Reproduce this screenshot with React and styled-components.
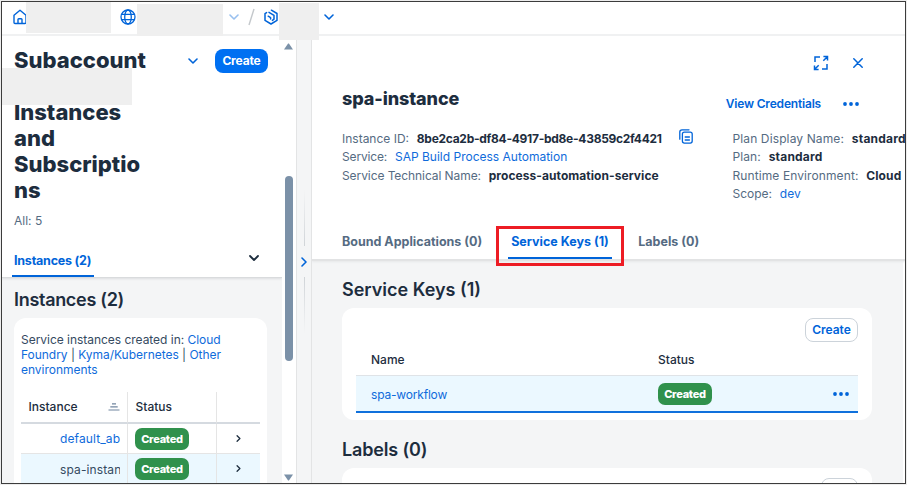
import React from 'react';
import styled, { createGlobalStyle } from 'styled-components';

const GlobalStyle = createGlobalStyle`
  * { box-sizing: border-box; }
  body { margin: 0; background: #ededed; overflow: hidden; }
  h1, h2, p { margin: 0; }
  svg { display: block; flex: none; }
`;

const Frame = styled.div`
  width: 905px;
  height: 483px;
  margin: 1px;
  border: 1px solid #3c3c3c;
  background: #fff;
  overflow: hidden;
  display: flex;
  flex-direction: column;
  font-family: Inter, "Noto Sans", sans-serif;
  font-size: 12px;
  color: #1d2d3e;
  white-space: nowrap;
`;

/* Breadcrumb bar */
const ShellBar = styled.header`
  flex: none;
  height: 34px;
  border-bottom: 2px solid #f0f1f2;
  display: flex;
  align-items: flex-start;
  padding-left: 11px;
  position: relative;
  z-index: 2;
`;
const Slot = styled.span`
  width: ${(p) => p.$w}px;
  height: 30px;
  flex: none;
  display: flex;
  align-items: center;
  justify-content: center;
  opacity: ${(p) => (p.$faded ? 0.4 : 1)};
`;
const Redacted = styled.span`
  flex: none;
  width: ${(p) => p.$w}px;
  height: ${(p) => p.$h}px;
  margin-top: ${(p) => p.$top}px;
  margin-right: ${(p) => p.$gap}px;
  margin-left: ${(p) => p.$lead || 0}px;
  background: #efefef;
`;

const Columns = styled.div`
  flex: 1;
  min-height: 0;
  display: flex;
`;

/* Left column */
const Master = styled.section`
  width: 280px;
  flex: none;
  display: flex;
  flex-direction: column;
  overflow: hidden;
`;
const MasterHeader = styled.div`
  flex: none;
  height: 242px;
  padding: 11px 14px 0 12px;
  display: flex;
  flex-direction: column;
  position: relative;
  border-bottom: 1px solid #d9dbdd;
  box-shadow: 0 1px 2px #dcdee0;
  z-index: 1;
`;
const TitleRow = styled.div`
  display: flex;
  align-items: flex-start;
`;
const PageTitle = styled.h1`
  width: 174px;
  font-size: 22px;
  font-weight: 800;
  line-height: 26px;
`;
const TitleLine = styled.span`
  display: block;
  min-height: 26px;
`;
const TitleCover = styled.div`
  position: absolute;
  left: 0;
  top: 32px;
  width: 130px;
  height: 37px;
  background: #efefef;
`;
const TitleChevron = styled.div`
  width: 27px;
  padding-top: 11px;
`;
const PrimaryButton = styled.button`
  width: 53px;
  height: 24px;
  margin-top: 2px;
  padding: 0;
  border: 0;
  border-radius: 8px;
  background: #0070f2;
  color: #fff;
  font: 700 12px/24px Inter, sans-serif;
  letter-spacing: -0.15px;
`;
const Counter = styled.p`
  margin-top: 10px;
  line-height: 16px;
  font-size: 12px;
  color: #556b82;
`;
const MasterTabs = styled.div`
  margin-top: auto;
  display: flex;
  justify-content: space-between;
  align-items: flex-start;
  height: 26px;
  padding-right: 9px;
`;
const MasterTab = styled.span`
  margin-left: -2px;
  width: 82px;
  height: 26px;
  padding-left: 2px;
  border-bottom: 2px solid #0064d9;
  font-size: 12.5px;
  font-weight: 700;
  line-height: 20px;
  letter-spacing: -0.22px;
  color: #0064d9;
`;
const TabMenu = styled.span`
  padding-top: 4px;
`;
const MasterBody = styled.div`
  flex: 1;
  min-height: 0;
  background: #f4f5f6;
  padding: 10px 15px 0 12px;
`;
const SectionTitle = styled.h2`
  font-size: 18px;
  font-weight: 600;
  line-height: 24px;
  letter-spacing: ${(p) => p.$ls || 0}px;
`;
const Card = styled.div`
  background: #fff;
  border-radius: 12px;
`;
const InstancesCard = styled(Card)`
  margin-top: 6px;
  height: 180px;
  padding: 15px 7px 0;
`;
const Note = styled.p`
  height: 59px;
  font-size: 12px;
  line-height: 14.8px;
  letter-spacing: -0.03px;
  color: #354a5f;
`;
const Link = styled.span`
  color: #0f6bdb;
`;
const InstanceTable = styled.div`
  display: grid;
  grid-template-columns: 107px 89px 43px;
`;
const HeadCell = styled.div`
  height: 32px;
  padding: 0 7px 1px 7.5px;
  display: flex;
  align-items: center;
  justify-content: space-between;
  font-weight: 500;
  border-bottom: 2px solid #d5dae0;
  border-right: ${(p) => (p.$last ? 0 : 1)}px solid #e5e5e5;
`;
const Cell = styled.div`
  height: 30px;
  padding: ${(p) => p.$pad || '0 7px 0'};
  display: flex;
  align-items: center;
  justify-content: ${(p) => (p.$center ? 'center' : 'flex-start')};
  background: ${(p) => (p.$selected ? '#ebf8ff' : '#fff')};
  border-bottom: 1px solid #e5e5e5;
  border-right: ${(p) => (p.$center ? 0 : 1)}px solid #e5e5e5;
`;
const ClippedName = styled.span`
  width: 60px;
  overflow: hidden;
  letter-spacing: 0.12px;
  color: ${(p) => (p.$link ? '#0f6bdb' : '#354a5f')};
`;
const Badge = styled.span`
  width: 54px;
  height: 22px;
  border-radius: 7px;
  background: #30914c;
  color: #fff;
  font-size: 11px;
  font-weight: 800;
  line-height: 22px;
  letter-spacing: -0.25px;
  text-align: center;
`;

const ScrollTrack = styled.div`
  width: 14px;
  flex: none;
  display: flex;
  flex-direction: column;
  align-items: center;
  justify-content: space-between;
  padding: 7px 1px 2px 0;
`;
const ScrollThumb = styled.div`
  width: 8px;
  height: 185px;
  margin-top: 12px;
  margin-left: 1px;
  border-radius: 4px;
  background: #7b91a8;
`;

const Gutter = styled.div`
  width: 16px;
  flex: none;
  background: #f4f5f6;
  border-left: 1px solid #e3e4e5;
  border-right: 1px solid #e3e4e5;
  display: flex;
  flex-direction: column;
  align-items: center;
  padding-top: 154px;
`;
const GutterLine = styled.div`
  width: 1px;
  height: 56px;
  background: linear-gradient(${(p) => (p.$up ? '0deg' : '180deg')}, #d0d4d8, #f4f5f6);
`;
const GutterArrow = styled.div`
  height: 31px;
  display: flex;
  align-items: center;
`;

/* Right column */
const Detail = styled.section`
  flex: 1;
  min-width: 0;
  overflow: hidden;
  display: flex;
  flex-direction: column;
`;
const DetailHeader = styled.div`
  flex: none;
  height: 225px;
  padding: 19px 42px 0 30px;
  border-bottom: 2px solid #e2e3e4;
  box-shadow: 0 1px 2px #e6e8ea;
  display: flex;
  flex-direction: column;
  position: relative;
`;
const WindowActions = styled.div`
  display: flex;
  justify-content: flex-end;
  align-items: center;
  gap: 24px;
  height: 16px;
`;
const DetailTitleRow = styled.div`
  margin-top: 15px;
  height: 26px;
  display: flex;
  align-items: center;
`;
const DetailTitle = styled.h1`
  flex: 1;
  font-size: 18px;
  font-weight: 800;
  letter-spacing: -0.1px;
  line-height: 26px;
`;
const TextAction = styled.span`
  margin-right: 21.5px;
  padding-top: 9px;
  font-weight: 600;
  letter-spacing: -0.19px;
  color: #0064d9;
`;
const DotsSlot = styled.span`
  padding-top: 9px;
  margin-right: 4.5px;
`;
const Facts = styled.div`
  margin-top: 17px;
  display: grid;
  grid-template-columns: 390.5px max-content;
`;
const FactList = styled.div`
  display: flex;
  flex-direction: column;
`;
const Fact = styled.div`
  height: 18.5px;
  display: flex;
  align-items: center;
  gap: 7.8px;
`;
const FactLabel = styled.span`
  color: #556b82;
  letter-spacing: ${(p) => p.$ls || 0}px;
`;
const FactValue = styled.span`
  font-weight: 700;
  letter-spacing: ${(p) => p.$ls || 0}px;
`;
const CopySlot = styled.span`
  margin-left: 9.5px;
  margin-top: -3px;
`;
const Tabs = styled.nav`
  margin-top: auto;
  height: 29px;
  display: flex;
  align-items: flex-start;
`;
const Tab = styled.span`
  height: 29px;
  margin-right: ${(p) => p.$gap || 0}px;
  padding: 0 3px;
  margin-left: -3px;
  font-size: 12.5px;
  font-weight: 700;
  line-height: 24px;
  letter-spacing: ${(p) => p.$ls || 0}px;
  color: ${(p) => (p.$active ? '#0064d9' : '#556b82')};
  border-bottom: 2px solid ${(p) => (p.$active ? '#0064d9' : 'transparent')};
`;
const Highlight = styled.div`
  position: absolute;
  left: 184px;
  top: 190px;
  width: 128px;
  height: 40px;
  border: 3px solid #ed1c24;
  z-index: 3;
`;
const DetailBody = styled.div`
  flex: 1;
  min-height: 0;
  margin-right: 2px;
  background: #f4f5f6;
  padding: 17px 30px 0;
`;
const KeysCard = styled(Card)`
  width: 530px;
  margin-top: 6px;
  height: 112px;
  padding: 10px 14px 0;
  display: flex;
  flex-direction: column;
`;
const LabelsCard = styled(Card)`
  width: 530px;
  margin-top: 6px;
  height: 60px;
  padding: 10px 14px 0;
  display: flex;
  justify-content: flex-end;
`;
const OutlineButton = styled.button`
  align-self: flex-end;
  width: 53px;
  height: 24px;
  padding: 0;
  border: 1px solid #ccd3da;
  border-radius: 8px;
  background: #fff;
  color: #0064d9;
  font: 600 12px/22px Inter, sans-serif;
  letter-spacing: -0.05px;
`;
const StubButton = styled.span`
  width: 37px;
  height: 24px;
  border: 1px solid #ccd3da;
  border-radius: 8px;
`;
const KeyRow = styled.div`
  display: grid;
  grid-template-columns: 287px 1fr auto;
  align-items: center;
  padding: ${(p) => (p.$head ? 2 : 1)}px 9px 0 15px;
  height: ${(p) => (p.$head ? 34 : 37)}px;
  background: ${(p) => (p.$head ? '#fff' : '#ebf8ff')};
  font-weight: ${(p) => (p.$head ? 500 : 400)};
  border-bottom: ${(p) => (p.$head ? '1px solid #dfe3e7' : '2px solid #0f70dc')};
`;
const KeyName = styled(Link)`
  letter-spacing: -0.19px;
`;
const LabelsTitle = styled(SectionTitle)`
  margin-top: 18px;
`;

const Chevron = ({ w = 10, h = 6, c = '#0064d9', s = 1.6 }) => (
  <svg width={w} height={h} viewBox="0 0 10 6" fill="none" stroke={c} strokeWidth={s} strokeLinecap="round" strokeLinejoin="round">
    <path d="M1 1l4 4 4-4" />
  </svg>
);
const ChevronRight = ({ w, h, c, s }) => (
  <svg width={w} height={h} viewBox="0 0 6 10" fill="none" stroke={c} strokeWidth={s} strokeLinecap="round" strokeLinejoin="round">
    <path d="M1 1l4 4-4 4" />
  </svg>
);
const Home = () => (
  <svg width="14" height="16" viewBox="0 0 14 16" fill="none" stroke="#0064d9" strokeWidth="1.4" strokeLinejoin="round">
    <path d="M1 6.3L7 1.2l6 5.1v7.2a1 1 0 0 1-1 1H2a1 1 0 0 1-1-1z" />
    <path d="M5 14.5v-4a.8.8 0 0 1 .8-.8h2.4a.8.8 0 0 1 .8.8v4" />
  </svg>
);
const Globe = () => (
  <svg width="16" height="16" viewBox="0 0 16 16" fill="none" stroke="#0064d9" strokeWidth="1.3">
    <circle cx="8" cy="8" r="7" />
    <ellipse cx="8" cy="8" rx="3.3" ry="7" />
    <path d="M1.6 5.4h12.8M1.6 10.6h12.8" />
  </svg>
);
const Hexagon = () => (
  <svg width="14" height="16" viewBox="0 0 14 16" fill="none" stroke="#0064d9" strokeWidth="1.5" strokeLinecap="round" strokeLinejoin="round">
    <path d="M2.6 3.6L1 4.6v6.8L7 15l6-3.6V4.5L7.4 1.2" />
    <path d="M5 3.4l5 3v3.8L8.4 11.4" />
    <path d="M4.2 7.2l2.4 1.5v1.2" />
  </svg>
);
const Slash = () => (
  <svg width="7" height="18" viewBox="0 0 7 18" stroke="#c4c8cc" strokeWidth="1.4">
    <path d="M6 1L1 17" />
  </svg>
);
const Triangle = ({ down }) => (
  <svg width="9" height="7" viewBox="0 0 9 7" fill="#7b91a8">
    <path d={down ? 'M0 .5h9L4.9 6.6h-.8z' : 'M0 6.5h9L4.9.4h-.8z'} />
  </svg>
);
const SortLines = () => (
  <svg width="12" height="8" viewBox="0 0 12 8" stroke="#7186a0" strokeWidth="1.2">
    <path d="M4 .8h4M2.3 3.9h7.4M.5 7h11" />
  </svg>
);
const Expand = () => (
  <svg width="16" height="16" viewBox="0 0 16 16" fill="none" stroke="#0064d9" strokeWidth="1.5">
    <path d="M7 2H2v5M9 14h5V9M10.4 1.5h4.1v4.1M14.3 1.7l-4 4M5.6 14.5H1.5v-4.1M1.7 14.3l4-4" />
  </svg>
);
const Close = () => (
  <svg width="10" height="10" viewBox="0 0 10 10" stroke="#0064d9" strokeWidth="1.5" strokeLinecap="round">
    <path d="M.8.8l8.4 8.4M9.2.8L.8 9.2" />
  </svg>
);
const Dots = () => (
  <svg width="16" height="4" viewBox="0 0 16 4" fill="#0064d9">
    <circle cx="2" cy="2" r="1.9" />
    <circle cx="8" cy="2" r="1.9" />
    <circle cx="14" cy="2" r="1.9" />
  </svg>
);
const Copy = () => (
  <svg width="14" height="15" viewBox="0 0 14 15" fill="none" stroke="#0064d9" strokeWidth="1.3" strokeLinecap="round">
    <path d="M.8 10.2V3A2.2 2.2 0 0 1 3 .8h7" />
    <rect x="3.4" y="3.1" width="9.8" height="11" rx="2" />
    <path d="M6.2 8h4.2M6.2 11h4.2" />
  </svg>
);

export default function App() {
  return (
    <>
      <GlobalStyle />
      <Frame>
        <ShellBar>
          <Slot $w={13}><Home /></Slot>
          <Redacted $w={85} $h={31} $top={0} $gap={9} />
          <Slot $w={16}><Globe /></Slot>
          <Redacted $w={86} $h={32} $top={2} $lead={1} $gap={6} />
          <Slot $w={10} $faded><Chevron /></Slot>
          <Slot $w={25}><Slash /></Slot>
          <Slot $w={14}><Hexagon /></Slot>
          <Redacted $w={40} $h={37} $top={1} $lead={1} $gap={5} />
          <Slot $w={10}><Chevron /></Slot>
        </ShellBar>
        <Columns>
          <Master>
            <MasterHeader>
              <TitleRow>
                <PageTitle>
                  <TitleLine>Subaccount</TitleLine>
                  <TitleLine />
                  <TitleLine>Instances</TitleLine>
                  <TitleLine>and</TitleLine>
                  <TitleLine>Subscriptio</TitleLine>
                  <TitleLine>ns</TitleLine>
                </PageTitle>
                <TitleChevron><Chevron /></TitleChevron>
                <PrimaryButton>Create</PrimaryButton>
              </TitleRow>
              <TitleCover />
              <Counter>All: 5</Counter>
              <MasterTabs>
                <MasterTab>Instances (2)</MasterTab>
                <TabMenu><Chevron c="#1d2d3e" s={1.8} /></TabMenu>
              </MasterTabs>
            </MasterHeader>
            <MasterBody>
              <SectionTitle $ls={-0.3}>Instances (2)</SectionTitle>
              <InstancesCard>
                <Note>
                  Service instances created in: <Link>Cloud<br />Foundry</Link> | <Link>Kyma/Kubernetes</Link> | <Link>Other<br />environments</Link>
                </Note>
                <InstanceTable>
                  <HeadCell>Instance <SortLines /></HeadCell>
                  <HeadCell>Status</HeadCell>
                  <HeadCell $last />
                  <Cell $pad="0 0 0 39px"><ClippedName $link>default_ab</ClippedName></Cell>
                  <Cell><Badge>Created</Badge></Cell>
                  <Cell $center><ChevronRight w={5} h={7} c="#1d2d3e" s={1.8} /></Cell>
                  <Cell $selected $pad="2px 0 0 39px"><ClippedName>spa-instance</ClippedName></Cell>
                  <Cell $selected><Badge>Created</Badge></Cell>
                  <Cell $selected $center><ChevronRight w={5} h={7} c="#1d2d3e" s={1.8} /></Cell>
                </InstanceTable>
              </InstancesCard>
            </MasterBody>
          </Master>
          <ScrollTrack>
            <Triangle />
            <ScrollThumb />
            <Triangle down />
          </ScrollTrack>
          <Gutter>
            <GutterLine $up />
            <GutterArrow><ChevronRight w={6} h={10} c="#0064d9" s={1.6} /></GutterArrow>
            <GutterLine />
          </Gutter>
          <Detail>
            <DetailHeader>
              <WindowActions><Expand /><Close /></WindowActions>
              <DetailTitleRow>
                <DetailTitle>spa-instance</DetailTitle>
                <TextAction>View Credentials</TextAction>
                <DotsSlot><Dots /></DotsSlot>
              </DetailTitleRow>
              <Facts>
                <FactList>
                  <Fact>
                    <FactLabel>Instance ID:</FactLabel>
                    <FactValue $ls={-0.28}>8be2ca2b-df84-4917-bd8e-43859c2f4421</FactValue>
                    <CopySlot><Copy /></CopySlot>
                  </Fact>
                  <Fact><FactLabel $ls={-0.15}>Service:</FactLabel><Link>SAP Build Process Automation</Link></Fact>
                  <Fact>
                    <FactLabel $ls={-0.08}>Service Technical Name:</FactLabel>
                    <FactValue $ls={0.06}>process-automation-service</FactValue>
                  </Fact>
                </FactList>
                <FactList>
                  <Fact><FactLabel $ls={0.12}>Plan Display Name:</FactLabel><FactValue $ls={0.2}>standard</FactValue></Fact>
                  <Fact><FactLabel $ls={0.1}>Plan:</FactLabel><FactValue $ls={0.2}>standard</FactValue></Fact>
                  <Fact><FactLabel $ls={0.1}>Runtime Environment:</FactLabel><FactValue $ls={0.1}>Cloud</FactValue></Fact>
                  <Fact><FactLabel>Scope:</FactLabel><Link>dev</Link></Fact>
                </FactList>
              </Facts>
              <Tabs>
                <Tab $gap={26}>Bound Applications (0)</Tab>
                <Tab $active $gap={26.5}>Service Keys (1)</Tab>
                <Tab>Labels (0)</Tab>
              </Tabs>
              <Highlight />
            </DetailHeader>
            <DetailBody>
              <SectionTitle>Service Keys (1)</SectionTitle>
              <KeysCard>
                <OutlineButton>Create</OutlineButton>
                <KeyRow $head><span>Name</span><span>Status</span></KeyRow>
                <KeyRow><KeyName>spa-workflow</KeyName><Badge>Created</Badge><Dots /></KeyRow>
              </KeysCard>
              <LabelsTitle $ls={-0.15}>Labels (0)</LabelsTitle>
              <LabelsCard><StubButton /></LabelsCard>
            </DetailBody>
          </Detail>
        </Columns>
      </Frame>
    </>
  );
}
